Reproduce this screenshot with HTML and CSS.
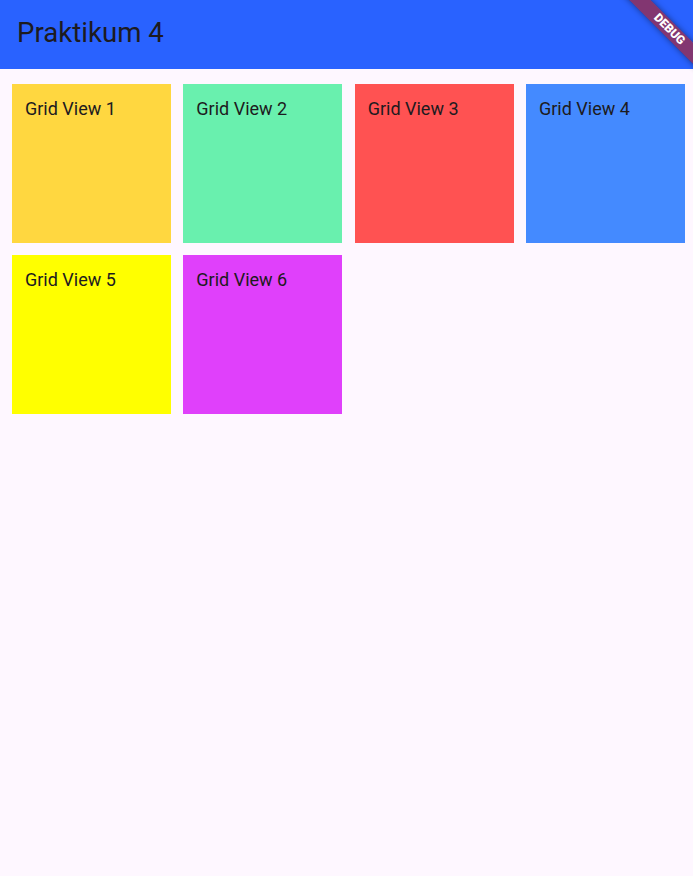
FILE: index.html
```
<!DOCTYPE html>
<html>
<head>
<meta charset="utf-8">
<link rel="stylesheet" href="styles.css">
</head>
<body>
<header class="appbar"><h1 class="title">Praktikum 4</h1></header>
<main class="grid">
  <div class="cell c1">Grid View 1</div>
  <div class="cell c2">Grid View 2</div>
  <div class="cell c3">Grid View 3</div>
  <div class="cell c4">Grid View 4</div>
  <div class="cell c5">Grid View 5</div>
  <div class="cell c6">Grid View 6</div>
</main>
<div class="banner-clip"><div class="banner-anchor"><div class="banner">DEBUG</div></div></div>
</body>
</html>
```
FILE: styles.css
```
html, body {
  margin: 0;
  padding: 0;
  width: 693px;
  height: 876px;
  overflow: hidden;
  background: #fef7ff;
  font-family: Roboto, "Noto Sans", sans-serif;
  color: #1d1b20;
}
body { position: relative; }
.appbar {
  height: 69px;
  background: #2962ff;
  display: flex;
  align-items: center;
  padding: 0 0 4px 17px;
  box-sizing: border-box;
}
.title {
  margin: 0;
  font-size: 27.6px;
  font-weight: 400;
  line-height: 1;
  color: #1d1b20;
}
.grid {
  display: grid;
  grid-template-columns: repeat(4, 159px);
  grid-auto-rows: 158.75px;
  column-gap: 12.33px;
  row-gap: 12.25px;
  padding: 15px 0 0 12px;
}
.cell {
  padding: 14px 13px;
  font-size: 18px;
  line-height: 1.2;
}
.c1 { background: #ffd740; }
.c2 { background: #69f0ae; }
.c3 { background: #ff5252; }
.c4 { background: #448aff; }
.c5 { background: #ffff00; }
.c6 { background: #e040fb; }
.banner-clip {
  position: absolute;
  top: 0;
  right: 0;
  width: 100px;
  height: 100px;
  overflow: hidden;
}
.banner-anchor {
  position: absolute;
  left: 100px;
  top: 0;
  width: 0;
  height: 0;
  transform: rotate(45deg);
  transform-origin: 0 0;
}
.banner {
  position: absolute;
  left: -56px;
  top: 29.5px;
  width: 120px;
  height: 15px;
  background: rgba(183, 28, 28, 0.627);
  box-shadow: 0 0 6px rgba(0, 0, 0, 0.45);
  color: #fff;
  font-size: 12px;
  font-weight: 900;
  line-height: 15px;
  text-align: center;
  font-family: Roboto, sans-serif;
}
```
